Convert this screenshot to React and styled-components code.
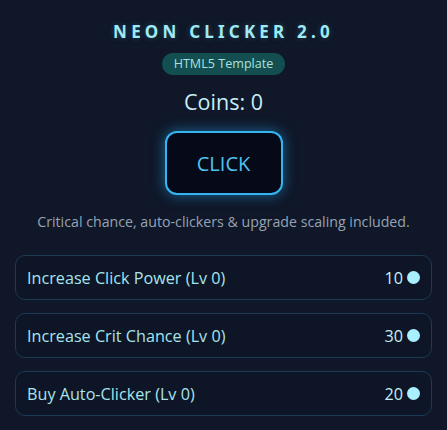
import React from 'react';
import styled, { createGlobalStyle } from 'styled-components';

const GlobalStyle = createGlobalStyle`
    html, body {
        margin: 0;
        padding: 0;
        background-color: #0f1728;
    }
    body {
        font-family: 'Open Sans', 'Noto Sans', sans-serif;
        color: #b8e6f0;
    }
`;

export const Page = styled.div`
    width: 447px;
    height: 430px;
    box-sizing: border-box;
    padding: 20px 15px 0;
    display: flex;
    flex-direction: column;
    align-items: center;
    overflow: hidden;
`;

export const Title = styled.h1`
    margin: 0;
    font-family: 'Noto Sans', 'Open Sans', sans-serif;
    font-size: 17px;
    font-weight: 700;
    letter-spacing: 4.2px;
    line-height: 24px;
    color: #9eeaf5;
    text-shadow: 0 0 6px rgb(110 220 240 / 25%);
`;

export const Badge = styled.span`
    margin-top: 9px;
    padding: 0 12px;
    height: 22px;
    line-height: 22px;
    border-radius: 11px;
    background-color: #134e50;
    color: #a9e1df;
    font-size: 12.6px;
`;

export const Coins = styled.div`
    margin-top: 13px;
    font-size: 21.5px;
    line-height: 28px;
    color: #c8eef8;
`;

export const ClickButton = styled.button`
    margin-top: 15px;
    width: 118px;
    height: 64px;
    border: 2px solid #35b5f0;
    border-radius: 12px;
    background-color: #060a18;
    color: #4fc3ef;
    font-family: 'Open Sans', 'Noto Sans', sans-serif;
    font-size: 20px;
    box-shadow: 0 0 14px rgb(40 170 240 / 55%);
    cursor: pointer;
`;

export const Note = styled.p`
    margin: 17px 0 0;
    font-size: 14.2px;
    line-height: 20px;
    color: #97a3b4;
    white-space: nowrap;
`;

export const Upgrades = styled.div`
    margin-top: 23px;
    align-self: stretch;
    display: flex;
    flex-direction: column;
    gap: 13px;
`;

export const UpgradeRow = styled.button`
    display: flex;
    align-items: center;
    justify-content: space-between;
    height: 45px;
    padding: 0 11px 0 11px;
    border: 1px solid #1d3954;
    border-radius: 10px;
    background-color: #0d1526;
    color: #a8e4ec;
    font-family: 'Open Sans', 'Noto Sans', sans-serif;
    font-size: 16.2px;
    text-align: left;
    cursor: pointer;
`;

export const Cost = styled.span`
    display: flex;
    align-items: center;
    gap: 4px;
    color: #c8eef5;

    &::after {
        content: '';
        width: 13px;
        height: 13px;
        border-radius: 50%;
        background-color: #a8f0ff;
    }
`;

const upgrades = [
    { name: 'Increase Click Power', level: 0, cost: 10 },
    { name: 'Increase Crit Chance', level: 0, cost: 30 },
    { name: 'Buy Auto-Clicker', level: 0, cost: 20 },
];

export default function App() {
    return (
        <>
            <GlobalStyle />
            <Page>
                <Title>NEON CLICKER 2.0</Title>
                <Badge>HTML5 Template</Badge>
                <Coins>Coins: 0</Coins>
                <ClickButton>CLICK</ClickButton>
                <Note>Critical chance, auto-clickers &amp; upgrade scaling included.</Note>
                <Upgrades>
                    {upgrades.map((u) => (
                        <UpgradeRow key={u.name}>
                            <span>
                                {u.name} (Lv {u.level})
                            </span>
                            <Cost>{u.cost}</Cost>
                        </UpgradeRow>
                    ))}
                </Upgrades>
            </Page>
        </>
    );
}
